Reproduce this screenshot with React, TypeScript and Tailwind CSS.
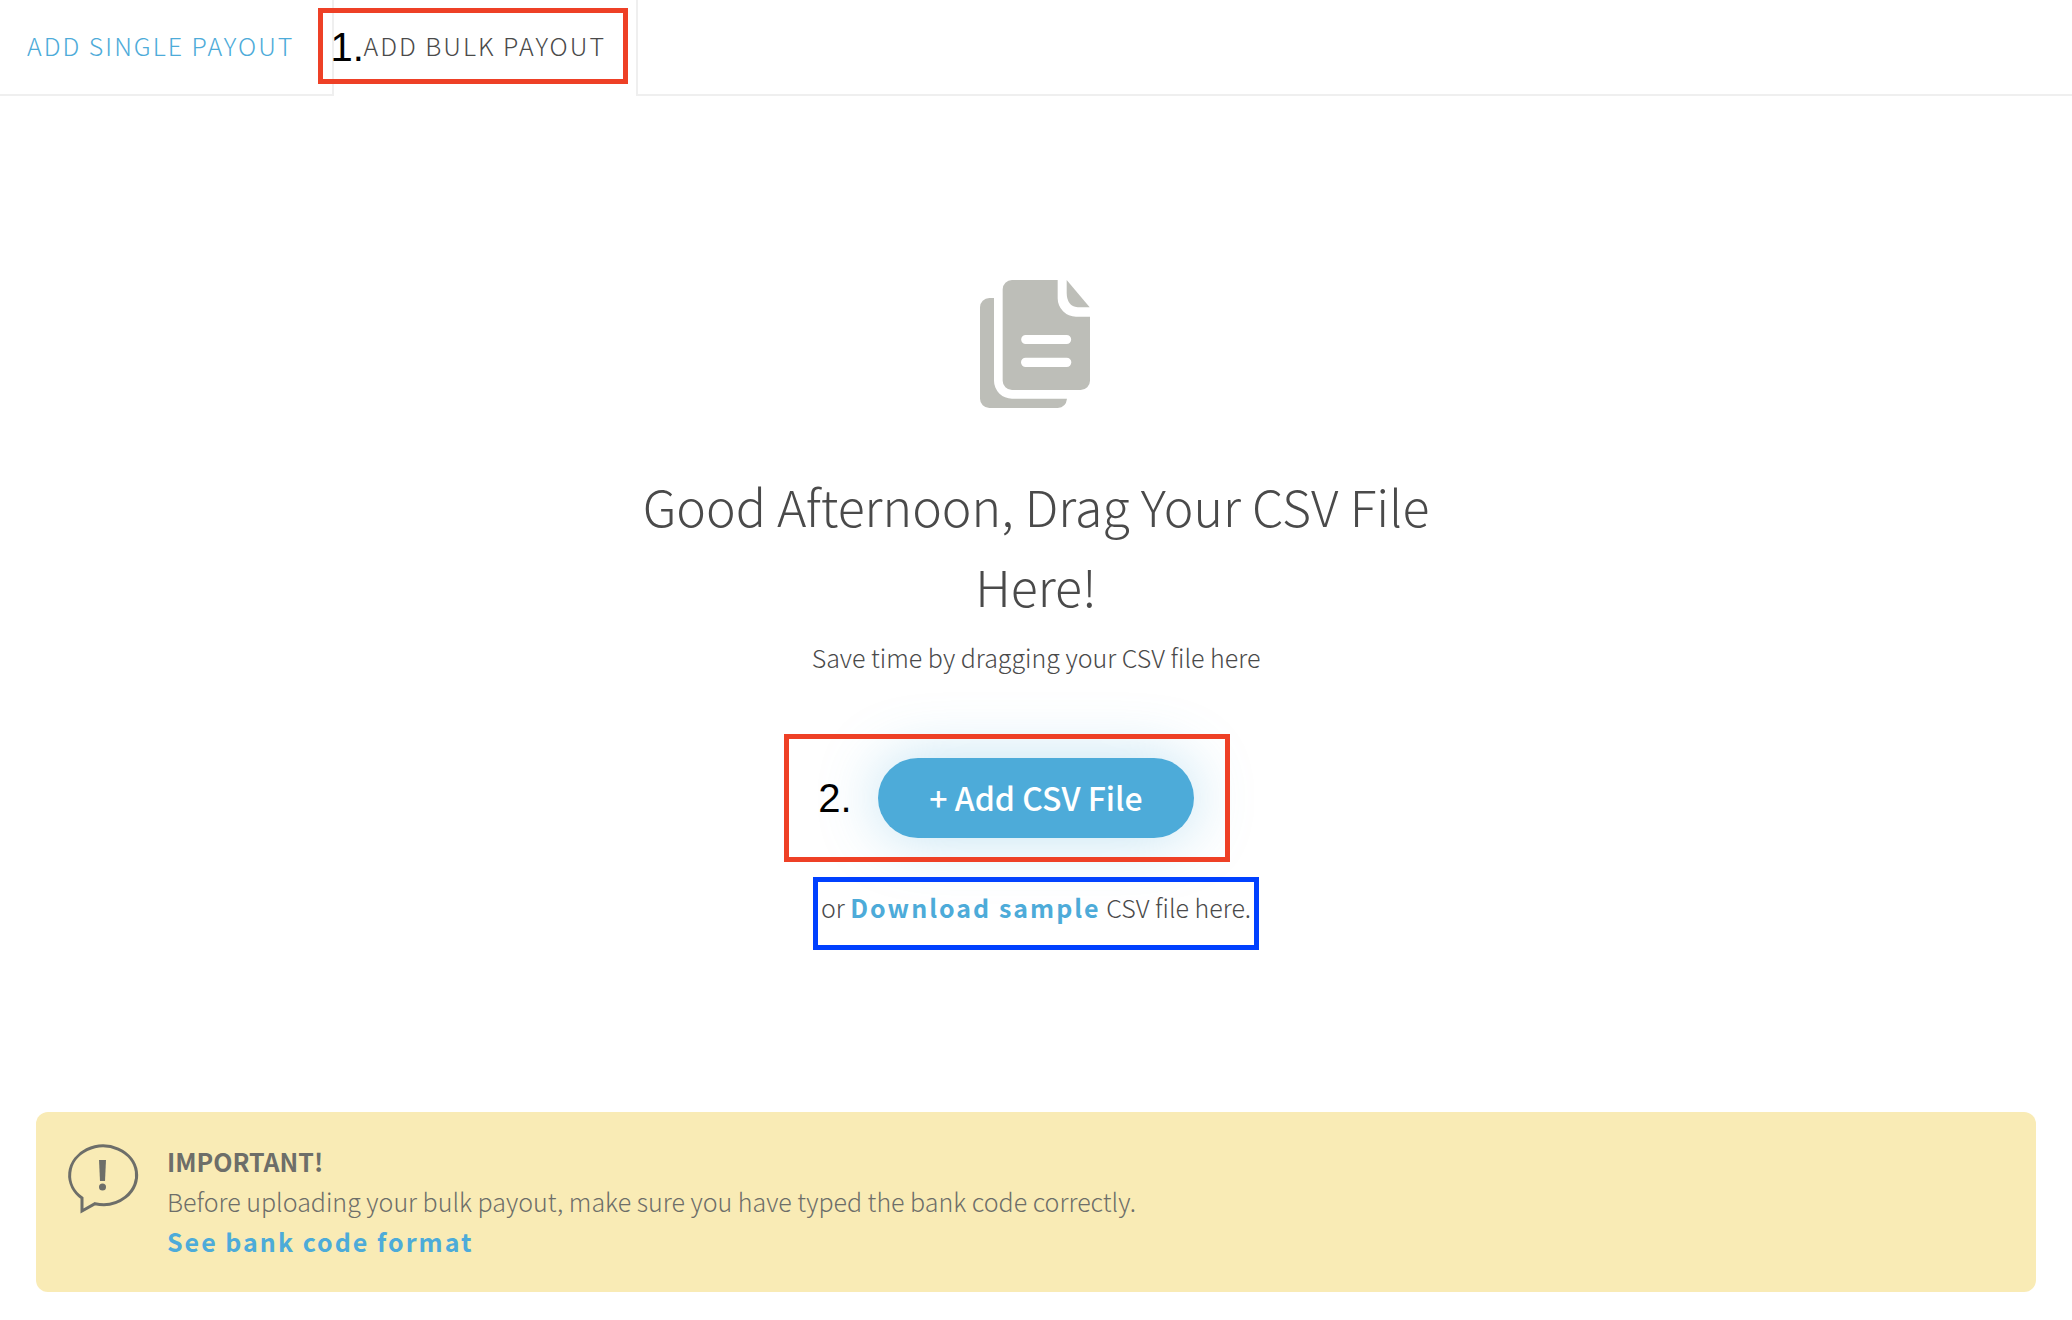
function DocumentIcon() {
  return (
    <svg viewBox="0 0 330 384" className="h-32 w-28" preserveAspectRatio="xMinYMid meet" fill="#bdbeb8" aria-hidden="true">
      <path d="M42 54H28A28 28 0 0 0 0 82V356A28 28 0 0 0 28 384H233Q258 382 261 356H96A54 54 0 0 1 42 302Z" />
      <path
        fillRule="evenodd"
        d="M96 0H233V55A55 55 0 0 0 288 110H330V302A28 28 0 0 1 302 330H96A28 28 0 0 1 68 302V28A28 28 0 0 1 96 0ZM137 165A13.500 13.500 0 0 0 137 192H260A13.500 13.500 0 0 0 260 165ZM137 233A14 14 0 0 0 137 261H260A14 14 0 0 0 260 233Z"
      />
      <path d="M260 0L329 82H293Q260 79 260 37Z" />
    </svg>
  );
}

function AlertBubbleIcon() {
  return (
    <svg viewBox="0 0 70 72" className="mt-[3px] h-[72px] w-[70px] shrink-0 overflow-visible" fill="none" aria-hidden="true">
      <path
        d="M14 54V67L27 59.700A33.500 29.300 0 1 0 14 54Z"
        stroke="#6d6e69"
        strokeWidth="3"
      />
      <path d="M31 16H38L37 37H32Z" fill="#6d6e69" />
      <circle cx="34.500" cy="43" r="3.500" fill="#6d6e69" />
    </svg>
  );
}

export default function App() {
  return (
    <div className="min-h-screen bg-white font-['Noto_Sans_CJK_SC',sans-serif] text-[25px] leading-10 font-light text-[#4a4a4a]">
      <nav className="flex h-24 uppercase tracking-[2px]">
        <button type="button" className="border-b-2 border-[#efefef] pr-[38px] pb-1 pl-[27px] text-[#4dabd9] uppercase tracking-[2px]">
          Add Single Payout
        </button>
        <div className="relative flex border-x-2 border-[#efefef]">
          <button type="button" className="pr-[30px] pb-1.5 pl-[29px] uppercase tracking-[2px]">
            Add Bulk Payout
          </button>
          <div className="pointer-events-none absolute top-2 right-2 bottom-3 -left-4 border-[5px] border-[#ee4026]" />
          <span className="pointer-events-none absolute top-[27px] -left-1 font-['Liberation_Sans',sans-serif] text-[40px] font-normal tracking-normal text-black">
            1.
          </span>
        </div>
        <div className="flex-1 border-b-2 border-[#efefef]" />
      </nav>

      <main className="flex flex-col items-center pt-[184px] text-center">
        <DocumentIcon />
        <h1 className="mt-[57px] max-w-[820px] text-[50px] leading-[80px]">
          Good Afternoon, Drag Your CSV File Here!
        </h1>
        <p className="mt-3">Save time by dragging your CSV file here</p>
        <div className="relative mt-[81px]">
          <button
            type="button"
            className="h-20 rounded-full bg-[#4dabd9] px-[51px] pb-0.5 text-[32px] font-medium text-white shadow-[0_0_60px_rgba(77,171,217,0.35)]"
          >
            + Add CSV File
          </button>
          <div className="pointer-events-none absolute -top-6 -right-9 -bottom-6 -left-[94px] border-[5px] border-[#ee4026]" />
          <span className="pointer-events-none absolute top-5 -left-[60px] font-['Liberation_Sans',sans-serif] text-[40px] font-normal text-black">
            2.
          </span>
        </div>
        <p className="mt-[39px] border-[5px] border-[#0040ff] px-[3px] pt-[5px] pb-[18px]">
          or{" "}
          <a href="#sample" className="font-bold tracking-[2px] text-[#4dabd9]">
            Download sample
          </a>{" "}
          CSV file here.
        </p>
      </main>

      <section className="mx-9 mt-[162px] flex gap-[29px] rounded-xl bg-[#f9ebb5] px-8 pt-[29px] pb-[31px] text-[#6d6e69]">
        <AlertBubbleIcon />
        <div>
          <h2 className="font-bold">IMPORTANT!</h2>
          <p>Before uploading your bulk payout, make sure you have typed the bank code correctly.</p>
          <a href="#format" className="font-bold tracking-[2px] text-[#4dabd9]">
            See bank code format
          </a>
        </div>
      </section>
    </div>
  );
}
